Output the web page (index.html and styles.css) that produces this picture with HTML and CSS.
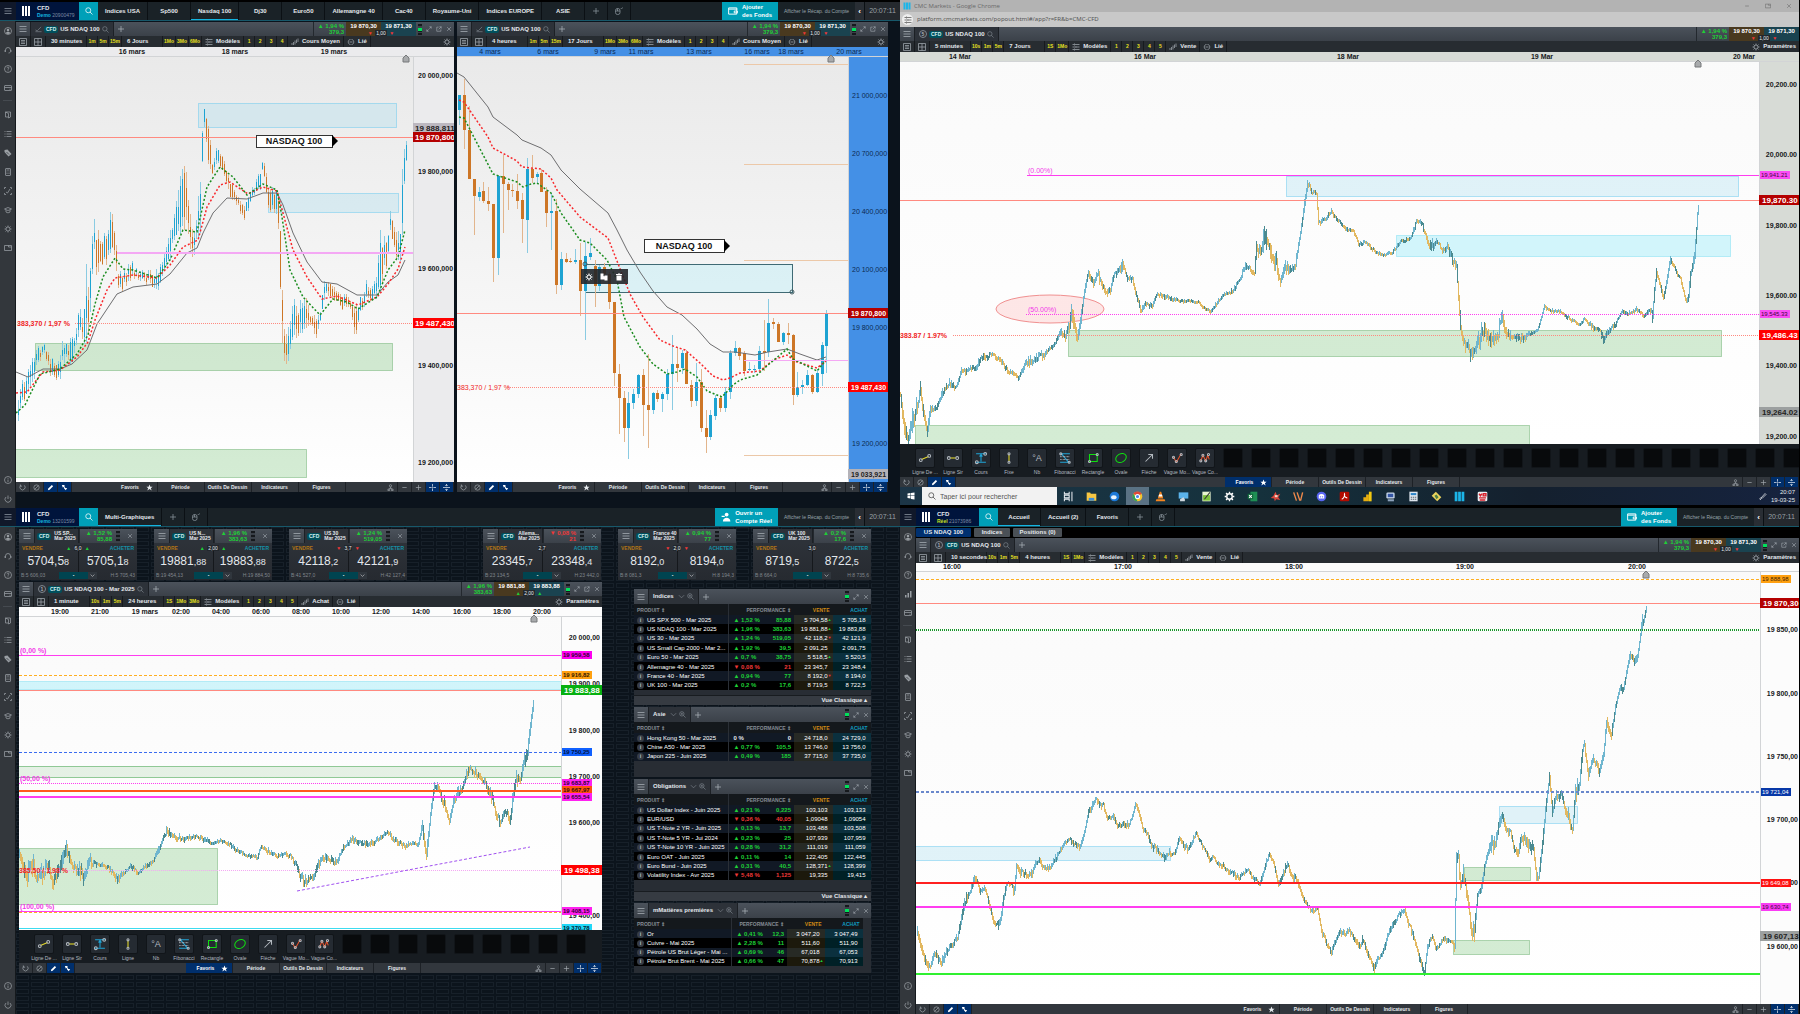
FILE: index.html
```html
<!doctype html>
<html lang="fr">
<head>
    <meta charset="UTF-8">
    <title>CMC Markets</title>
    <link rel="stylesheet" href="styles.css">
</head>
<body>
<svg class="sprite" aria-hidden="true">
    <symbol id="i-menu" viewBox="0 0 16 16"><path d="M1 3h14M1 8h14M1 13h14"/></symbol>
    <symbol id="i-user" viewBox="0 0 16 16"><circle cx="8" cy="8" r="7"/><circle cx="8" cy="6" r="2.6" class="f"/><path class="f" d="M3.5 12.5c1-4 8-4 9 0-2 2-7 2-9 0z"/></symbol>
    <symbol id="i-headset" viewBox="0 0 16 16"><path d="M3 12V8a5 5 0 0 1 10 0v3c0 2-2 3-4 3"/><path d="M2 8v4M14 8v4"/></symbol>
    <symbol id="i-help" viewBox="0 0 16 16"><circle cx="8" cy="8" r="7"/><path d="M6 6.5c0-3 4-3 4-.5 0 1.500-2 1.500-2 3.500M8 11v1.500"/></symbol>
    <symbol id="i-card" viewBox="0 0 16 16"><rect x="1" y="3" width="14" height="10" rx="1"/><path d="M1 7h14M11 10.500h2"/></symbol>
    <symbol id="i-doc" viewBox="0 0 16 16"><path d="M3 2h10v10l-4 2V5L3 2v10h5"/></symbol>
    <symbol id="i-list" viewBox="0 0 16 16"><path d="M1 3h2M1 8h2M1 13h2M5 3h10M5 8h10M5 13h10"/></symbol>
    <symbol id="i-tag" viewBox="0 0 16 16"><path class="f" d="M1 2l6-1 8 9-6 5-8-9z"/><path d="M5 6l5 5" stroke="#33373c"/></symbol>
    <symbol id="i-calc" viewBox="0 0 16 16"><rect x="3" y="1" width="10" height="14" rx="1"/><path d="M5 4h6M5 8h2M9 8h2M5 11h2M9 11h2"/></symbol>
    <symbol id="i-trend" viewBox="0 0 16 16"><path d="M4 10l3 2 5-8M1 4V1h3M12 1h3v3M15 12v3h-3M4 15H1v-3"/></symbol>
    <symbol id="i-cap" viewBox="0 0 16 16"><path d="M1 6l7-3 7 3-7 3zM4 8v4c2 2 6 2 8 0V8"/></symbol>
    <symbol id="i-gear" viewBox="0 0 16 16"><circle cx="8" cy="8" r="4"/><path d="M8 1v3M8 12v3M1 8h3M12 8h3M3 3l2 2M11 11l2 2M13 3l-2 2M5 11l-2 2"/></symbol>
    <symbol id="i-window" viewBox="0 0 16 16"><path d="M1 3h14v10H1zM9 3v3h6"/></symbol>
    <symbol id="i-copy" viewBox="0 0 16 16"><path class="f" d="M1 1h6v5l4 2v5H1zM9 5h6v10H9z"/></symbol>
    <symbol id="i-bin" viewBox="0 0 16 16"><path class="f" d="M3 5h10v10H3zM2 2h4V1h4v1h4v2H2z"/></symbol>
    <symbol id="i-bars" viewBox="0 0 16 16"><path class="f" d="M2 10h3v5H2zM7 6h3v9H7zM12 2h3v13h-3z"/></symbol>
    <symbol id="i-info" viewBox="0 0 16 16"><circle cx="8" cy="8" r="7"/><path d="M8 4v1.500M8 7v5"/></symbol>
    <symbol id="i-power" viewBox="0 0 16 16"><path d="M8 1v7M4 4a6 6 0 1 0 8 0"/></symbol>
    <symbol id="i-search" viewBox="0 0 16 16"><circle cx="6.500" cy="6.500" r="5"/><path d="M10 10l5 5"/></symbol>
    <symbol id="i-zoom" viewBox="0 0 16 16"><circle cx="6.500" cy="6.500" r="5"/><path d="M10 10l5 5M4 6.500h5M6.500 4v5"/></symbol>
    <symbol id="i-wallet" viewBox="0 0 16 16"><path d="M1 3h13v10H1zM1 5h14M10 8h5v3h-5z"/></symbol>
    <symbol id="i-person" viewBox="0 0 16 16"><circle class="f" cx="9" cy="4" r="3"/><path class="f" d="M3 15c0-8 12-8 12 0zM1 6h5v2H1z"/></symbol>
    <symbol id="i-mouse" viewBox="0 0 16 16"><rect x="1" y="3" width="9" height="12" rx="4"/><path d="M5 3v5M1 8h9M12 3l1 1 2-3"/></symbol>
    <symbol id="i-check" viewBox="0 0 16 16"><path d="M1 13h14M1 9l4 2 9-9"/></symbol>
    <symbol id="i-max" viewBox="0 0 16 16"><path d="M9 2h5v5M14 2L9 7M7 14H2V9M2 14l5-5"/></symbol>
    <symbol id="i-pop" viewBox="0 0 16 16"><path d="M7 3H2v11h11V9M9 2h5v5M14 2L7 9"/></symbol>
    <symbol id="i-close" viewBox="0 0 16 16"><path d="M3 3l10 10M13 3L3 13"/></symbol>
    <symbol id="i-panel" viewBox="0 0 16 16"><path d="M1 1h14v14H1zM4 5h8M4 8h8M4 11h8"/></symbol>
    <symbol id="i-grid" viewBox="0 0 16 16"><path d="M1 1h14v14H1zM8 1v14M1 8h14"/></symbol>
    <symbol id="i-sliders" viewBox="0 0 16 16"><path d="M1 3h3M6 3h9M1 8h6M9 8h6M1 13h3M6 13h9M5 1v4M8 6v4M5 11v4"/></symbol>
    <symbol id="i-pair" viewBox="0 0 16 16"><path d="M2 14v-4M5 14V8M8 13V5M11 10V3M14 8V1"/></symbol>
    <symbol id="i-link" viewBox="0 0 16 16"><path d="M7 3C1 3 1 13 7 13M9 3c6 0 6 10 0 10M5 8h6"/></symbol>
    <symbol id="i-pen" viewBox="0 0 16 16"><path d="M4 12l8-9 2 2-8 8zM4 12c-4 0-3 4 0 3"/></symbol>
    <symbol id="i-reload" viewBox="0 0 16 16"><path d="M4 3a6 6 0 1 0 8 0M3 1v4h4"/></symbol>
    <symbol id="i-none" viewBox="0 0 16 16"><circle cx="8" cy="8" r="6"/><path d="M4 12l8-8"/></symbol>
    <symbol id="i-pencil" viewBox="0 0 16 16"><path class="f" d="M2 14l1-4 8-8 3 3-8 8z"/></symbol>
    <symbol id="i-swap" viewBox="0 0 16 16"><path class="f" d="M2 2h6v4l2 3h4l-3 5-4-4V7L4 8z"/></symbol>
    <symbol id="i-star" viewBox="0 0 16 16"><path class="f" d="M8 1l2 5h5l-4 3.500 2 5.500-5-3.500L3 15l2-5.500L1 6h5z"/></symbol>
    <symbol id="i-tree" viewBox="0 0 16 16"><circle cx="8" cy="4" r="2.500"/><path d="M8 7v3M4 10h8M2 12h4v3H2zM10 12h4v3h-4z"/></symbol>
    <symbol id="i-minus" viewBox="0 0 16 16"><path d="M3 8h10"/></symbol>
    <symbol id="i-plus" viewBox="0 0 16 16"><path d="M2 8h12M8 2v12"/></symbol>
    <symbol id="i-cross" viewBox="0 0 16 16"><path d="M0 8h6M10 8h6M8 0v6M8 10v6M7 8h2"/></symbol>
    <symbol id="i-split" viewBox="0 0 16 16"><path d="M0 8h16M8 1v4M8 11v4M5 4l3-3 3 3M5 12l3 3 3-3"/></symbol>
    <symbol id="i-down" viewBox="0 0 16 16"><path d="M2 5l6 6 6-6"/></symbol>
    <symbol id="t-trend" viewBox="0 0 20 20"><path class="y" d="M5 12l10-4"/><circle cx="4" cy="13" r="2"/><circle cx="16" cy="7" r="2"/></symbol>
    <symbol id="t-hline" viewBox="0 0 20 20"><path class="y" d="M6 10h8"/><circle cx="4" cy="10" r="2"/><circle cx="16" cy="10" r="2"/></symbol>
    <symbol id="t-price" viewBox="0 0 20 20"><path class="b" d="M3 4h14M3 16h14M10 5v10M8 8l2-3 2 3"/><circle cx="16" cy="4" r="2"/><circle cx="4" cy="16" r="2"/></symbol>
    <symbol id="t-vline" viewBox="0 0 20 20"><path class="y" d="M10 5v10"/><circle cx="10" cy="4" r="1.500"/><circle cx="10" cy="16" r="1.500"/></symbol>
    <symbol id="t-fibo" viewBox="0 0 20 20"><path class="b" d="M3 4h14M3 16h14M5 4l10 12"/><path d="M3 8h14M3 12h14" stroke-dasharray="1 1"/><circle cx="4" cy="4" r="1.500"/><circle cx="16" cy="16" r="1.500"/></symbol>
    <symbol id="t-rect" viewBox="0 0 20 20"><path class="g" d="M5 5h11v10H5z"/><circle cx="16" cy="5" r="1.500"/><circle cx="5" cy="15" r="1.500"/></symbol>
    <symbol id="t-oval" viewBox="0 0 20 20"><ellipse class="g" cx="10" cy="10" rx="8" ry="6" transform="rotate(-30 10 10)"/></symbol>
    <symbol id="t-arrow" viewBox="0 0 20 20"><path d="M5 15L15 5M9 5h6v6"/></symbol>
    <symbol id="t-wave" viewBox="0 0 20 20"><path class="r" d="M5 9l4 7 7-12"/><circle cx="5" cy="9" r="1.500"/><circle cx="9" cy="15" r="1.500"/><circle cx="16" cy="5" r="1.500"/></symbol>
    <symbol id="t-wave2" viewBox="0 0 20 20"><path class="r" d="M4 14l3-8 4 8 3-8 2 6"/><circle cx="4" cy="14" r="1.500"/><circle cx="7" cy="6" r="1.500"/><circle cx="11" cy="14" r="1.500"/><circle cx="15" cy="5" r="1.500"/></symbol>
    <symbol id="a-windows" viewBox="0 0 16 16"><path fill="#fff" d="M1 3l6-1v5H1zM8 2l7-1v6H8zM1 8h6v5l-6-1zM8 8h7v7l-7-1z"/></symbol>
    <symbol id="a-task" viewBox="0 0 16 16"><path stroke="#e8edf2" fill="none" d="M2 1v3h7V1M2 6h7v4H2zM2 15v-3h7v3M13 1v14"/></symbol>
    <symbol id="a-folder" viewBox="0 0 16 16"><path fill="#f6c643" d="M1 2h5l1 2h8v10H1z"/><path fill="#3d8ed8" d="M4 10h8v4H4z"/></symbol>
    <symbol id="a-bird" viewBox="0 0 16 16"><circle cx="8" cy="8" r="7" fill="#1c79d8"/><ellipse cx="7" cy="9" rx="4" ry="3" fill="#e8f2fb"/></symbol>
    <symbol id="a-chrome" viewBox="0 0 16 16"><circle cx="8" cy="8" r="7" fill="#f3c52f"/><path fill="#df4a3a" d="M2 4a7 7 0 0 1 12 0L8 8z"/><path fill="#2fa35b" d="M2 4l5 9 1 2A7 7 0 0 1 2 4z"/><circle cx="8" cy="8" r="3" fill="#4a86e8" stroke="#fff"/></symbol>
    <symbol id="a-cone" viewBox="0 0 16 16"><path fill="#f5851f" d="M7 1h2l3 10H4zM2 12h12l1 3H1z"/><path fill="#fff" d="M6 5h4l1 3H5z"/></symbol>
    <symbol id="a-screen" viewBox="0 0 16 16"><path fill="#5bb3ea" d="M1 2h14v9H1z"/><path fill="#cfd8df" d="M3 12l5-3 2 3v3H3z"/></symbol>
    <symbol id="a-note" viewBox="0 0 16 16"><path fill="#e9f5d0" d="M2 1h12v14H2z"/><path fill="#7cc13b" d="M3 6h10v8H3z"/><path stroke="#333" d="M5 12l8-10"/></symbol>
    <symbol id="a-gear" viewBox="0 0 16 16"><circle cx="8" cy="8" r="4" fill="none" stroke="#fff" stroke-width="2"/><path stroke="#fff" stroke-width="2" d="M8 1v2M8 13v2M1 8h2M13 8h2M3 3l2 2M11 11l2 2M13 3l-2 2M5 11l-2 2"/></symbol>
    <symbol id="a-excel" viewBox="0 0 16 16"><path fill="#1f8f54" d="M5 1h10v14H5z"/><path fill="#0e6a3b" d="M1 4h8v8H1z"/><path stroke="#fff" d="M3 6l4 4M7 6l-4 4"/></symbol>
    <symbol id="a-splat" viewBox="0 0 16 16"><path fill="#d9453a" d="M8 1l2 5 5-2-3 5 3 4-6-1-2 3-1-4-5-1 4-3z"/><path fill="#f1d7c8" d="M7 6h4v3H7z"/></symbol>
    <symbol id="a-strokes" viewBox="0 0 16 16"><path stroke="#f08a4b" stroke-width="2" d="M1 2l4 12M6 2l4 12M14 2l-3 12"/></symbol>
    <symbol id="a-chat" viewBox="0 0 16 16"><circle cx="8" cy="8" r="7" fill="#5865f2"/><path fill="#fff" d="M4 6c2-2 6-2 8 0v5H4z"/><circle cx="6.500" cy="8.500" r="1" fill="#5865f2"/><circle cx="9.500" cy="8.500" r="1" fill="#5865f2"/></symbol>
    <symbol id="a-pdf" viewBox="0 0 16 16"><rect x="1" y="1" width="14" height="14" rx="2" fill="#b30b00"/><path fill="none" stroke="#fff" d="M4 12c3-1 5-6 4-8-1 3 1 6 4 6"/></symbol>
    <symbol id="a-bars" viewBox="0 0 16 16"><path fill="#e6ad10" d="M2 9h4v6H2zM6 5h4v10H6z"/><path fill="#f2c811" d="M10 1h4v14h-4z"/></symbol>
    <symbol id="a-pc" viewBox="0 0 16 16"><rect x="2" y="2" width="12" height="9" rx="2" fill="#c9d8ea"/><path fill="#3355a4" d="M4 4h8v5H4z"/><path fill="#8da2bb" d="M4 12h9v3H4z"/></symbol>
    <symbol id="a-calc" viewBox="0 0 16 16"><path fill="#dde6ee" d="M2 1h12v14H2z"/><path fill="#2f86c9" d="M4 3h8v3H4z"/><path stroke="#59636e" stroke-dasharray="2 1" d="M4 9h8M4 12h8"/></symbol>
    <symbol id="a-leaf" viewBox="0 0 16 16"><path fill="#ead25c" d="M1 7l6-6 8 8-6 6z"/><path fill="#4d7e45" d="M5 7l3-2 3 4-3 3z"/></symbol>
    <symbol id="a-cmc" viewBox="0 0 16 16"><path fill="#1cb5e8" d="M1 1h4v14H1zM6 1h4v14H6zM11 1h4v14h-4z"/></symbol>
    <symbol id="a-red" viewBox="0 0 16 16"><rect x="1" y="1" width="14" height="14" rx="2" fill="#e9eef2"/><path stroke="#d81f2a" stroke-width="2" fill="none" d="M3 4l2 3 2-3M9 4h4v3H9zM3 10h10M4 13h8"/></symbol>
</svg>

<main class="board">
    <section class="screen">
        <header class="topbar">
            <button class="burger" aria-label="Menu"><svg class="icon"><use href="#i-menu"/></svg></button>
            <div class="brand"><i class="logo"></i><p>CFD<small><b>Demo</b> 20900479</small></p></div>
            <button class="find" aria-label="Rechercher"><svg class="icon"><use href="#i-search"/></svg></button>
            <nav class="tabs">
                <a href="#">Indices USA</a><a href="#">Sp500</a><a href="#" class="selected">Nasdaq 100</a><a href="#">Dj30</a><a href="#">Euro50</a><a href="#">Allemangne 40</a><a href="#">Cac40</a><a href="#">Royaume-Uni</a><a href="#">Indices EUROPE</a><a href="#">ASIE</a>
                <button aria-label="Ajouter"><svg class="icon"><use href="#i-plus"/></svg></button>
                <button aria-label="Souris"><svg class="icon"><use href="#i-mouse"/></svg></button>
            </nav>
            <button class="funds"><svg class="icon"><use href="#i-wallet"/></svg><span>Ajouter<br>des Fonds</span></button>
            <a href="#" class="recap">Afficher le Récap. du Compte</a>
            <button class="fold" aria-label="Replier">‹</button>
            <time class="clock">20:07:11</time>
        </header>
        <div class="body">
            <nav class="rail"></nav>
            <div class="duo">
                <article class="win win-a" data-win="a"></article>
                <article class="win win-b" data-win="b"></article>
            </div>
        </div>
    </section>

    <section class="screen browser">
        <div class="titlebar">
            <svg class="icon"><use href="#a-cmc"/></svg><span>CMC Markets - Google Chrome</span>
            <div class="caption">
                <button aria-label="Réduire"><svg class="icon"><use href="#i-minus"/></svg></button>
                <button aria-label="Restaurer"><svg class="icon"><use href="#i-window"/></svg></button>
                <button aria-label="Fermer"><svg class="icon"><use href="#i-close"/></svg></button>
            </div>
        </div>
        <div class="urlbar">
            <button aria-label="Infos du site"><svg class="icon"><use href="#i-sliders"/></svg></button>
            <input type="text" aria-label="Adresse" value="platform.cmcmarkets.com/popout.html#/app?r=FR&amp;b=CMC-CFD">
        </div>
        <article class="win" data-win="d"></article>
        <footer class="taskbar">
            <button aria-label="Démarrer"><svg class="icon"><use href="#a-windows"/></svg></button>
            <label class="ask"><svg class="icon"><use href="#i-search"/></svg><input type="text" placeholder="Taper ici pour rechercher" aria-label="Rechercher"></label>
            <div class="apps"></div>
            <svg class="icon"><use href="#i-pen"/></svg>
            <time>20:07<br>19-03-25</time>
        </footer>
    </section>

    <section class="screen">
        <header class="topbar">
            <button class="burger" aria-label="Menu"><svg class="icon"><use href="#i-menu"/></svg></button>
            <div class="brand"><i class="logo"></i><p>CFD<small><b>Demo</b> 13201599</small></p></div>
            <button class="find" aria-label="Rechercher"><svg class="icon"><use href="#i-search"/></svg></button>
            <nav class="tabs">
                <a href="#" class="selected">Multi-Graphiques</a>
                <button aria-label="Ajouter"><svg class="icon"><use href="#i-plus"/></svg></button>
                <button aria-label="Souris"><svg class="icon"><use href="#i-mouse"/></svg></button>
            </nav>
            <button class="funds wide"><svg class="icon"><use href="#i-person"/></svg><span>Ouvrir un<br>Compte Réel</span></button>
            <a href="#" class="recap">Afficher le Récap. du Compte</a>
            <button class="fold" aria-label="Replier">‹</button>
            <time class="clock">20:07:11</time>
        </header>
        <div class="body">
            <nav class="rail"></nav>
            <div class="desk">
                <div class="tiles"><div class="group" id="tiles1"></div><div class="group" id="tiles2"></div></div>
                <div class="work">
                    <article class="win" data-win="c"></article>
                    <div class="lists"></div>
                </div>
            </div>
        </div>
    </section>

    <section class="screen live">
        <header class="topbar">
            <button class="burger" aria-label="Menu"><svg class="icon"><use href="#i-menu"/></svg></button>
            <div class="brand"><i class="logo"></i><p>CFD<small><b>Réel</b> 21073986</small></p></div>
            <button class="find" aria-label="Rechercher"><svg class="icon"><use href="#i-search"/></svg></button>
            <nav class="tabs">
                <a href="#" class="selected">Accueil</a><a href="#">Accueil (2)</a><a href="#">Favoris</a>
                <button aria-label="Ajouter"><svg class="icon"><use href="#i-plus"/></svg></button>
                <button aria-label="Souris"><svg class="icon"><use href="#i-mouse"/></svg></button>
            </nav>
            <button class="funds"><svg class="icon"><use href="#i-wallet"/></svg><span>Ajouter<br>des Fonds</span></button>
            <a href="#" class="recap">Afficher le Récap. du Compte</a>
            <button class="fold" aria-label="Replier">‹</button>
            <time class="clock">20:07:11</time>
        </header>
        <div class="body">
            <nav class="rail" data-extra="bars"></nav>
            <div class="stack">
                <div class="subtabs"><button class="selected">US NDAQ 100</button><button>Indices</button><button>Positions (0)</button></div>
                <article class="win" data-win="e"></article>
            </div>
        </div>
    </section>
</main>
<script src="script.js"></script>
</body>
</html>
```

FILE: styles.css
```css
*{
    box-sizing: border-box;
}
body{
    margin: 0;
    background: #000;
    color: #e4e8ec;
    font: bold 6px/7px "Liberation Sans", Arial, sans-serif;
}
h2, p{
    margin: 0;
    font: inherit;
}
a{
    color: inherit;
    text-decoration: none;
}
button, input{
    margin: 0;
    padding: 0;
    border: 0;
    background: none;
    color: inherit;
    font: inherit;
}
button{
    display: flex;
    align-items: center;
    justify-content: center;
    flex: none;
    white-space: nowrap;
}
.sprite{
    display: none;
}
.icon{
    display: block;
    flex: none;
    width: 8px;
    height: 8px;
    fill: none;
    stroke: currentColor;
    stroke-width: 1.5;
}
.f{
    fill: currentColor;
    stroke: none;
}
.y{ stroke: #e8dc28; }
.b{ stroke: #1fa5d8; }
.g{ stroke: #10e010; }
.r{ stroke: #e8522a; }
.apps .icon, .titlebar > .icon, .taskbar > button .icon{
    stroke: none;
}

.board{
    display: grid;
    grid-template-columns: 1fr 1fr;
    grid-template-rows: 508fr 506fr;
    height: 100vh;
}
.screen{
    display: flex;
    flex-direction: column;
    min-width: 0;
    min-height: 0;
    overflow: hidden;
}
.screen:first-child{
    padding-top: 2px;
}
.body{
    display: flex;
    flex: 1;
    min-height: 0;
    background: #0b131c;
}

/* top bar */
.topbar{
    display: flex;
    flex: none;
    height: 19px;
    background: #1a2227;
    border-bottom: 1px solid #17586a;
}
.burger{
    width: 16px;
    background: #10182a;
    color: #8e97a3;
}
.brand{
    display: flex;
    align-items: center;
    gap: 7px;
    width: 63px;
    padding-left: 6px;
    background: #00143c;
}
.logo{
    width: 8px;
    height: 10px;
    background: linear-gradient(90deg, #fff 2px, transparent 2px 3px, #fff 3px 5px, transparent 5px 6px, #fff 6px);
}
.brand small{
    display: block;
    font: 5px/6px "Liberation Sans", Arial, sans-serif;
    color: #7c8ba3;
}
.brand b{
    color: #14b4e0;
}
.live .brand b{
    color: #c8e020;
}
.find{
    width: 19px;
    background: #00a0b8;
    color: #fff;
}
.tabs{
    display: flex;
    flex: 1;
}
.tabs a, .tabs button{
    display: flex;
    align-items: center;
    justify-content: center;
    min-width: 43px;
    padding: 0 7px;
    border-right: 1px solid #0b1014;
    white-space: nowrap;
}
.tabs button{
    min-width: 23px;
    color: #8b959d;
}
.tabs .selected{
    box-shadow: inset 0 -1px #14b4e0;
}
.funds{
    gap: 4px;
    width: 56px;
    background: #00a0b8;
    color: #fff;
    text-align: left;
    line-height: 8px;
}
.funds .icon{
    width: 10px;
    height: 10px;
}
.wide{
    width: 63px;
}
.recap{
    display: flex;
    align-items: center;
    justify-content: center;
    width: 77px;
    font-weight: normal;
    font-size: 5px;
    color: #98a2aa;
    white-space: nowrap;
}
.fold{
    width: 9px;
    background: #292e34;
    color: #fff;
    font-size: 8px;
}
.clock{
    width: 36px;
    border-left: 1px solid #0b1014;
    background: #25292e;
    color: #9aa0a6;
    font: 7px/18px "Liberation Sans", Arial, sans-serif;
    text-align: center;
}

/* left rail */
.rail{
    display: flex;
    flex: none;
    flex-direction: column;
    width: 16px;
    background: #33373c;
    color: #9a9fa4;
    border-right: 1px solid #15191d;
}
.rail button{
    height: 19px;
}
.rail hr{
    width: 9px;
    height: 1px;
    margin: 3px auto 4px;
    border: 0;
    background: #454a50;
}
.rail .low{
    margin-top: auto;
}

/* chart windows */
.duo{
    display: flex;
    flex: 1;
    gap: 3px;
    min-width: 0;
    padding: 1px 12px 16px 0;
}
.win{
    display: flex;
    flex: 1;
    flex-direction: column;
    min-width: 0;
    min-height: 0;
}
.win-a{
    flex: 438;
}
.win-b{
    flex: 431;
}
.win-head{
    display: flex;
    flex: none;
    align-items: stretch;
    height: 14px;
    background: linear-gradient(#4b525b, #3b4149);
}
.win-head > button{
    width: 14px;
    color: #a9b0b7;
}
.win-tab{
    display: flex;
    align-items: center;
    gap: 2px;
    padding: 0 4px;
    background: #2d3239;
    border: solid #1c2025;
    border-width: 0 1px;
    white-space: nowrap;
}
.win-tab .icon{
    width: 7px;
    height: 7px;
    color: #7f868e;
}
.num{
    width: 8px;
    height: 8px;
    border: 1px solid #7f868e;
    border-radius: 50%;
    color: #a9b0b7;
    font-size: 5px;
    line-height: 6px;
    text-align: center;
}
.cfd{
    padding: 0 2px;
    border-radius: 2px;
    background: #00505c;
    color: #d8f0f2;
    font-size: 5px;
    line-height: 7px;
}
.win-head .space{
    flex: 1;
}
.perf{
    padding: 1px 2px 0 4px;
    border-left: 1px solid #23282e;
    color: #1ed036;
    line-height: 6px;
    text-align: right;
    white-space: nowrap;
}
.down{
    color: #f03838;
}
.up{
    color: #1ed036;
}
.quote{
    position: relative;
    display: flex;
}
.quote button{
    align-items: flex-start;
    width: 35px;
    padding-top: 1px;
    background: #49391f;
    color: #fff;
}
.quote button + button{
    background: #1a4350;
}
.quote .spread{
    position: absolute;
    right: 0;
    bottom: 0;
    left: 0;
    font-size: 5px;
    line-height: 5px;
    text-align: center;
}
.spread i{
    margin: 0 1px;
    font-style: normal;
}
.spread b{
    padding: 0 1px;
    background: #22272d;
    font-weight: normal;
}
.level{
    align-self: center;
    width: 4px;
    height: 11px;
    margin: 0 2px;
    background: linear-gradient(#16191d 2px, #3a4048 2px 4px, #00e05a 4px 7px, #16191d 7px 8px, #3a4048 8px 9px, #16191d 9px);
}
.win-head .ctl{
    width: 10px;
}
.ctl .icon{
    width: 6px;
    height: 6px;
}

.toolbar{
    display: flex;
    flex: none;
    height: 11px;
    background: #272c31;
    overflow: hidden;
}
.toolbar button{
    gap: 3px;
    padding: 0 3px;
    border-right: 1px solid #171a1e;
}
.toolbar .icon{
    color: #a0a7ae;
}
.toolbar .ico{
    width: 15px;
}
.toolbar .span{
    justify-content: flex-start;
    width: 41px;
    padding-left: 5px;
}
.toolbar .pick{
    min-width: 11px;
    padding: 0 1px;
    color: #e8e020;
    font-size: 5px;
}
.toolbar .end{
    margin-left: auto;
    border: 0;
}

.chart{
    flex: 1;
    min-height: 0;
    overflow: hidden;
}
.chart svg{
    display: block;
    width: 100%;
    height: 100%;
    font: bold 7px "Liberation Sans", Arial, sans-serif;
}
.chart-a .strip, .chart-a .axis{ fill: #ebebed; }
.chart-b .strip, .chart-b .axis{ fill: #4490e6; }
.chart-c .strip, .chart-c .axis, .chart-e .strip, .chart-e .axis{ fill: #fcfcfc; }
.chart-d .strip, .chart-d .axis{ fill: #d7dbd6; }
.chart-b .label{
    fill: #0c2a52;
    font-weight: normal;
}
.edge{ stroke: #d2d4d6; }
.label{ fill: #16181a; }
.date{ text-anchor: middle; }
.tick-end{ text-anchor: end; }
.zone-blue{ fill: rgba(160, 220, 240, .3); stroke: #68c8ee; stroke-dasharray: 1 1; }
.zone-cyan{ fill: rgba(120, 230, 250, .32); stroke: #7fdff2; stroke-dasharray: 1 1; }
.zone-green{ fill: rgba(120, 195, 120, .32); stroke: #6cb070; stroke-dasharray: 1 1; }
.zone-band{ fill: rgba(120, 190, 120, .18); stroke: #2f9a3a; stroke-dasharray: 1 1; }
.zone-edit{ fill: rgba(180, 235, 245, .4); stroke: #3f6a74; }
.zone-oval{ fill: rgba(255, 180, 180, .3); stroke: #f09090; }
.ln{ stroke-width: 1; fill: none; shape-rendering: crispEdges; }
.thick{ stroke-width: 2; }
.dots{ stroke-dasharray: 1 1; }
.dash{ stroke-dasharray: 3 2; }
.red{ stroke: #ff8a80; }
.hot{ stroke: #ff2020; }
.pink{ stroke: #f4a8f4; }
.mag{ stroke: #ff3cf0; }
.amber{ stroke: #ffae20; }
.blue{ stroke: #3a6cf0; }
.navy{ stroke: #6a88cc; }
.flame{ stroke: #ff5a1e; }
.green{ stroke: #18962a; }
.lime{ stroke: #30f030; }
.cyan{ stroke: #3cdcf0; }
.sand{ stroke: #ecc8a8; }
.violet{ stroke: #a050f0; }
.avg{ fill: none; stroke: #6e6e70; stroke-width: 1; }
.avg-red{ stroke: #f8282c; stroke-width: 1.5; stroke-dasharray: 2 2; }
.avg-green{ stroke: #1a8c1e; stroke-width: 1.5; stroke-dasharray: 2 2; }
.up-bar{ stroke: #1ea3d2; }
.down-bar{ stroke: #cd7626; }
.up-wick{ stroke: #8acbe2; }
.down-wick{ stroke: #e2b58c; }
.c-up{ stroke: #6fb6cf; }
.c-down{ stroke: #e2b860; }
.c-mix{ stroke: #4a8a90; }
.note-red{ fill: #f02424; }
.note-mag{ fill: #f23ae8; }
.light{ font-weight: normal; }
.big{ font-size: 8px; }
.small{ font-size: 6px; }
.chart-d .small, .chart-e .small{ font-weight: normal; }
.flag{ fill: #fff; stroke: #333; }
.flag-text{ fill: #111; font-size: 9px; text-anchor: middle; }
.home{ fill: #a8aaac; stroke: #77797b; }
.handle{ fill: none; stroke: #3f5a60; }
.edit-bar{ fill: rgba(34, 38, 42, .9); }
.chart .edit{ color: #fff; stroke: #fff; stroke-width: 2; fill: none; }

/* drawing tools under a chart */
.dock{
    display: flex;
    flex: none;
    height: 33px;
    padding: 4px 0 0 11px;
    background: #171c21;
    overflow: hidden;
}
.dock button{
    flex-direction: column;
    justify-content: flex-start;
    gap: 1px;
    width: 28px;
    font-weight: normal;
    font-size: 5px;
    line-height: 6px;
    color: #b4bac0;
}
.dock .slot{
    display: flex;
    flex: none;
    align-items: center;
    justify-content: center;
    width: 20px;
    height: 20px;
    border: 1px solid #111519;
    border-radius: 2px;
    background: #252b32;
    font: 9px/12px "Liberation Sans", Arial, sans-serif;
}
.slot .icon{
    width: 14px;
    height: 14px;
}
.dock .empty{
    margin: 0 4px;
    background: #080a0c;
}
.tools{
    display: flex;
    flex: none;
    height: 10px;
    background: #32373d;
}
.tools .mid{
    display: flex;
    flex: 1;
    justify-content: center;
}
.tools button{
    width: 14px;
    border-right: 1px solid #1d2126;
    color: #a5abb1;
    line-height: 8px;
}
.tools .mid button{
    width: 47px;
    color: #e4e8ec;
    font-size: 5px;
}
.tools .mid button:first-child{
    justify-content: space-between;
    padding: 0 4px;
}
.tools .icon{
    width: 7px;
    height: 7px;
}
.tools .on, .tools .mid .on{
    background: #002f6c;
    color: #fff;
}
.tools span{
    flex: 1;
}

/* browser window */
.browser, .live{
    padding-right: 1px;
}
.titlebar{
    display: flex;
    flex: none;
    align-items: center;
    gap: 3px;
    height: 12px;
    padding-left: 3px;
    background: #b3b3b3;
    color: #6a6a6a;
    font: 6px/8px "Open Sans", sans-serif;
}
.caption{
    display: flex;
    margin-left: auto;
}
.caption button{
    width: 21px;
}
.caption .icon{
    width: 6px;
    height: 6px;
}
.urlbar{
    display: flex;
    flex: none;
    align-items: center;
    gap: 4px;
    height: 15px;
    padding-left: 2px;
    background: #c8c8c8;
    color: #555;
}
.urlbar button{
    width: 11px;
    height: 11px;
    border-radius: 50%;
    background: #eee;
}
.urlbar input{
    flex: 1;
    height: 11px;
    font: 6px/11px "Noto Sans", sans-serif;
}
.taskbar{
    display: flex;
    flex: none;
    align-items: center;
    height: 18px;
    margin-bottom: 3px;
    background: linear-gradient(90deg, #1c3547, #15313c 40%, #14202e 70%, #16233f);
}
.taskbar > button{
    width: 22px;
}
.ask{
    display: flex;
    align-items: center;
    gap: 4px;
    width: 135px;
    height: 18px;
    padding-left: 6px;
    background: #f2f2f2;
    color: #444;
}
.ask input{
    flex: 1;
    min-width: 0;
    height: 11px;
    font: 7px/11px "Liberation Sans", Arial, sans-serif;
}
.ask input::placeholder{
    color: #555;
}
.apps{
    display: flex;
    flex: 1;
}
.apps button{
    width: 23px;
    height: 18px;
}
.apps .icon{
    width: 11px;
    height: 11px;
}
.apps .on{
    background: #5a7284;
}
.taskbar time{
    width: 32px;
    padding-right: 4px;
    font: 6px/8px "Liberation Sans", Arial, sans-serif;
    text-align: right;
}

/* quote tiles and price lists */
.desk{
    --bg: #0c141c;
    display: flex;
    flex: 1;
    flex-direction: column;
    gap: 2px;
    min-width: 0;
    padding: 2px 29px 41px 3px;
    background:
        linear-gradient(90deg, transparent 13px, var(--bg) 13px),
        linear-gradient(transparent 5px, var(--bg) 5px),
        linear-gradient(90deg, #172029 1px, transparent 1px 12px, #172029 12px),
        linear-gradient(#172029 1px, transparent 1px 4px, #172029 4px),
        var(--bg);
    background-size: 15px 7px;
}
.tiles, .group{
    display: flex;
    justify-content: space-between;
}
.group{
    gap: 17px;
}
.tile{
    width: 118px;
    height: 51px;
    background: linear-gradient(#30353c, #262a30);
}
.tile .win-head > button{
    width: 15px;
}
.tile h2{
    width: 22px;
    font-size: 5px;
    line-height: 5px;
}
.tile .win-tab{
    gap: 3px;
    padding: 0 2px;
}
.tile .perf{
    flex: 1;
}
.tile .perf.down{
    color: #f03838;
}
.tile .level{
    background: repeating-linear-gradient(#16191d 0 2px, #3a4048 2px 4px);
}
.sides{
    display: grid;
    grid-template-columns: 1fr auto 1fr;
    padding: 2px 3px 0;
    font-size: 5px;
    line-height: 6px;
}
.sell{ color: #b07416; }
.buy{ color: #1690a8; }
.sides .buy{ text-align: right; }
.tile .spread{
    font-weight: normal;
}
.price{
    display: flex;
    height: 21px;
}
.price p{
    flex: 1;
    font: 12px/21px "Liberation Sans", Arial, sans-serif;
    text-align: center;
}
.price p + p{
    border-left: 1px solid #15181c;
}
.price small{
    font-size: 9px;
}
.range{
    display: grid;
    grid-template-columns: 1fr 29px 9px 1fr;
    padding: 0 2px;
    color: #80868c;
    font-weight: normal;
    font-size: 5px;
    line-height: 7px;
    white-space: nowrap;
}
.range b{
    background: #004450;
    color: #fff;
    text-align: center;
}
.range button{
    background: #30363d;
    color: #fff;
}
.range .icon{
    width: 5px;
    height: 5px;
}
.range span:last-child{
    text-align: right;
}

.work{
    display: flex;
    flex: 1;
    gap: 32px;
    min-height: 0;
}
.lists{
    display: grid;
    flex: none;
    grid-template-rows: 116fr 70fr 122fr 70fr;
    gap: 2px;
    width: 237px;
    padding-top: 7px;
}
.panel{
    display: flex;
    flex-direction: column;
    min-height: 0;
    background: #282d34;
    overflow: hidden;
}
.panel .win-head{
    height: 15px;
}
.panel h2{
    margin-right: 2px;
}
.panel table{
    border-collapse: collapse;
    table-layout: fixed;
    width: 100%;
    line-height: 8px;
    white-space: nowrap;
}
.panel th, .panel td{
    height: 9px;
    padding: 0 3px;
    overflow: hidden;
    text-align: right;
}
.panel thead tr{
    height: 11px;
    background: #14181c;
}
.panel th{
    color: #858c94;
    font-size: 5px;
}
.panel thead .sell{ color: #d08a14; }
.panel thead .buy{ color: #109cc0; }
.panel .name{
    width: 94px;
    padding-right: 0;
    text-align: left;
}
.panel .pct{
    width: 33px;
    padding: 0 0 0 5px;
    border-left: 1px solid #2a2f36;
    text-align: left;
}
.panel .chg{
    width: 33px;
    padding-left: 0;
}
.panel .ask-col{
    width: 38px;
}
.panel td.name{
    font-weight: normal;
    color: #fff;
}
.panel tbody tr{
    background: #111925;
}
.panel tbody tr:nth-child(even){
    background: #000;
}
.panel td.bid{ background: rgba(92, 84, 40, .3); padding: 0 5px 0 0; }
.panel td.ask-col{ background: rgba(0, 92, 110, .35); padding: 0 5px 0 0; }
.panel td.bid, .panel td.ask-col{
    font-weight: normal;
    color: #fff;
}
.panel .bid.up::after, .panel .bid.down::after{
    content: "▲";
    float: right;
    width: 4px;
    margin-right: -4px;
    color: #1ed036;
    font-size: 4px;
}
.panel .bid.down::after{
    content: "▼";
    color: #f03838;
}
.dot{
    display: inline-block;
    width: 7px;
    height: 7px;
    margin-right: 3px;
    border-radius: 50%;
    background: #363c44;
    font-size: 5px;
    font-style: normal;
    line-height: 7px;
    text-align: center;
}
.rows8{ height: 86px; }
.rows3{ height: 39px; }
.rows4{ height: 48px; }
.classic{
    justify-content: flex-end;
    height: 10px;
    margin-top: auto;
    padding-right: 4px;
    background: #363b42;
    border-top: 1px solid #181c20;
}
.scroll table{
    width: 229px;
}
.scroll .name{
    width: 97px;
}
.scroll .pct{
    width: 33px;
}
.scroll .chg{
    width: 23px;
}

/* live account */
.stack{
    display: flex;
    flex: 1;
    flex-direction: column;
    min-width: 0;
    background: #000;
}
.subtabs{
    display: flex;
    flex: none;
    gap: 3px;
    height: 11px;
    padding: 1px 0;
}
.subtabs button{
    width: 36px;
    border-radius: 1px;
    background: #4a5056;
}
.subtabs .selected{
    width: 55px;
    background: #003070;
}
.subtabs :last-child{
    width: 49px;
}
```

FILE: script.js
```js
var icon = function(id){ return '<svg class="icon"><use href="#' + id + '"/></svg>'; };
var iconBtn = function(id, label, cls){
    return '<button class="' + (cls || '') + '" aria-label="' + label + '">' + icon(id) + '</button>';
};

/* rails */
var railItems = ['user', 'headset', 'help', 'card', '-', 'doc', 'list', 'tag', 'calc', 'trend', 'cap', 'gear', 'window'];
document.querySelectorAll('.rail').forEach(function(rail){
    var items = railItems.slice();
    if(rail.dataset.extra){
        items.splice(3, 0, rail.dataset.extra);
    }
    rail.innerHTML = items.map(function(n){
        return n == '-' ? '<hr>' : iconBtn('i-' + n, n);
    }).join('') + iconBtn('i-info', 'info', 'low') + iconBtn('i-power', 'power');
});

/* taskbar */
document.querySelector('.apps').innerHTML = ['task', 'folder', 'bird', 'chrome', 'cone', 'screen', 'note', 'gear', 'excel', 'splat', 'strokes', 'chat', 'pdf', 'bars', 'pc', 'calc', 'leaf', 'cmc', 'red'].map(function(n){
    return iconBtn('a-' + n, n, n == 'chrome' ? 'on' : '');
}).join('');

/* windows */
var wins = {
    a: {mark: icon('i-check'), name: 'US NDAQ 100', plus: 1, perf: ['1,94 %', '379,3'], q: ['19 870,30', '19 871,30', '1,00'], dir: 'down', ctl: 3,
        t1: '30 minutes', p1: ['1m', '5m', '15m'], t2: '6 Jours', p2: ['1Mo', '3Mo', '6Mo'], m: 4, side: 'Cours Moyen'},
    b: {mark: icon('i-check'), name: 'US NDAQ 100', plus: 1, perf: ['1,94 %', '379,3'], q: ['19 870,30', '19 871,30', '1,00'], dir: 'down', ctl: 3,
        t1: '4 heures', p1: ['1m', '5m', '15m'], t2: '17 Jours', p2: ['1Mo', '3Mo', '6Mo'], m: 4, side: 'Cours Moyen'},
    c: {mark: '<span class="num">1</span>', name: 'US NDAQ 100 - Mar 2025', plus: 1, perf: ['1,96 %', '383,63'], q: ['19 881,88', '19 883,88', '2,00'], dir: 'up', ctl: 3,
        t1: '1 minute', p1: ['10s', '1m', '5m'], t2: '24 heures', p2: ['1S', '1Mo', '3Mo'], m: 5, side: 'Achat', param: 1, dock: 9, fourth: 'Ligne'},
    d: {mark: '<span class="num">5</span>', name: 'US NDAQ 100', perf: ['1,94 %', '379,3'], q: ['19 870,30', '19 871,30', '1,00'], dir: 'down', ctl: 0,
        t1: '5 minutes', p1: ['10s', '1m', '5m'], t2: '7 Jours', p2: ['1S', '1Mo'], m: 5, side: 'Vente', param: 1, dock: 21, fourth: 'Fixe'},
    e: {mark: '<span class="num">1</span>', name: 'US NDAQ 100', plus: 1, perf: ['1,94 %', '379,3'], q: ['19 870,30', '19 871,30', '1,00'], dir: 'down', ctl: 3,
        t1: '10 secondes', p1: ['10s', '1m', '5m'], t2: '4 heures', p2: ['1S', '1Mo'], m: 5, side: 'Vente', param: 1}
};
function arrow(dir){
    return '<i class="' + dir + '">' + (dir == 'up' ? '▲' : '▼') + '</i>';
}
function picks(list){
    return list.map(function(t){ return '<button class="pick">' + t + '</button>'; }).join('');
}
function winHead(w){
    var s = '<header class="win-head">' + iconBtn('i-menu', 'Menu') +
        '<div class="win-tab">' + w.mark + '<span class="cfd">CFD</span><h2>' + w.name + '</h2>' + icon('i-search') + '</div>' +
        (w.plus ? iconBtn('i-plus', 'Ajouter') : '') + '<span class="space"></span>' +
        '<div class="perf">▲ ' + w.perf[0] + '<br>' + w.perf[1] + '</div>' +
        '<div class="quote"><button>' + w.q[0] + '</button><button>' + w.q[1] + '</button>' +
        '<span class="spread">' + arrow(w.dir) + ' <b>' + w.q[2] + '</b> ' + arrow(w.dir) + '</span></div>';
    if(w.ctl){
        s += '<i class="level"></i>' + iconBtn('i-max', 'Agrandir', 'ctl') + iconBtn('i-pop', 'Détacher', 'ctl') + iconBtn('i-close', 'Fermer', 'ctl');
    }
    return s + '</header>';
}
function toolbar(w){
    var nums = ['1', '2', '3', '4', '5'].slice(0, w.m);
    return '<div class="toolbar">' + iconBtn('i-panel', 'Panneau', 'ico') + iconBtn('i-grid', 'Grille', 'ico') +
        '<button class="span">' + w.t1 + '</button>' + picks(w.p1) +
        '<button class="span">' + w.t2 + '</button>' + picks(w.p2) +
        '<button>' + icon('i-sliders') + 'Modèles</button>' + picks(nums) +
        '<button>' + icon('i-pair') + w.side + '</button><button>' + icon('i-link') + 'Lié</button>' +
        '<button class="end">' + icon('i-gear') + (w.param ? 'Paramètres' : '') + '</button></div>';
}
function dock(w){
    var list = [['trend', 'Ligne De ...'], ['hline', 'Ligne Sir'], ['price', 'Cours'], ['vline', w.fourth], ['', 'Nb'], ['fibo', 'Fibonacci'],
        ['rect', 'Rectangle'], ['oval', 'Ovale'], ['arrow', 'Flèche'], ['wave', 'Vague Mo...'], ['wave2', 'Vague Co...']];
    var s = '<div class="dock">' + list.map(function(t){
        return '<button><span class="slot">' + (t[0] ? icon('t-' + t[0]) : '°A') + '</span>' + t[1] + '</button>';
    }).join('');
    for(var i = 0; i < w.dock; i++){
        s += '<span class="slot empty"></span>';
    }
    return s + '</div>';
}
function tools(w){
    return '<footer class="tools">' + iconBtn('i-reload', 'Réinitialiser') + iconBtn('i-none', 'Effacer') + iconBtn('i-pencil', 'Dessiner', 'on') + iconBtn('i-swap', 'Aimant', 'on') +
        '<div class="mid"><button class="' + (w.dock ? 'on' : '') + '"><span>Favoris</span>' + icon('i-star') + '</button><button>Période</button><button>Outils De Dessin</button><button>Indicateurs</button><button>Figures</button></div>' +
        iconBtn('i-tree', 'Objets') + iconBtn('i-minus', 'Zoom arrière') + iconBtn('i-plus', 'Zoom avant') + iconBtn('i-cross', 'Curseur', 'on') + iconBtn('i-split', 'Échelle', 'on') + '</footer>';
}
document.querySelectorAll('.win').forEach(function(el){
    var k = el.dataset.win, w = wins[k];
    el.innerHTML = winHead(w) + toolbar(w) + '<div class="chart chart-' + k + '" data-chart="' + k + '"></div>' + (w.dock ? dock(w) : '') + tools(w);
});

/* quote tiles: name, dir, pct, change, spread, ticks, bid, ask, low, high */
var tiles = [
    ['US SP...', 'up', '1,52 %', '85,88', '6,0', 'up', '5704,5', '8', '5705,1', '8', '5 606,03', '5 705,43'],
    ['US N...', 'up', '1,96 %', '383,63', '2,00', 'up', '19881', ',88', '19883', ',88', '19 454,13', '19 884,50'],
    ['US 30', 'up', '1,24 %', '519,05', '3,7', 'down', '42118', ',2', '42121', ',9', '41 527,0', '42 127,4'],
    ['Allema...', 'down', '0,08 %', '21', '2,7', '', '23345', ',7', '23348', ',4', '23 134,5', '23 442,0'],
    ['France 40', 'up', '0,94 %', '77', '2,0', 'down', '8192', ',0', '8194', ',0', '8 081,3', '8 194,3'],
    ['UK 100', 'up', '0,2 %', '17,6', '3,0', '', '8719', ',5', '8722', ',5', '8 664,0', '8 735,6']
];
tiles.forEach(function(t, i){
    var a = t[5] ? arrow(t[5]) : '';
    document.getElementById(i < 3 ? 'tiles1' : 'tiles2').insertAdjacentHTML('beforeend',
        '<article class="tile"><header class="win-head">' + iconBtn('i-menu', 'Menu') +
        '<div class="win-tab"><span class="cfd">CFD</span><h2>' + t[0] + '<br>Mar 2025</h2></div>' +
        '<div class="perf ' + t[1] + '">' + (t[1] == 'up' ? '▲ ' : '▼ ') + t[2] + '<br>' + t[3] + '</div><i class="level"></i>' + iconBtn('i-close', 'Fermer', 'ctl') + '</header>' +
        '<div class="sides"><span class="sell">VENDRE</span><span class="spread">' + a + ' <b>' + t[4] + '</b> ' + a + '</span><span class="buy">ACHETER</span></div>' +
        '<div class="price"><p>' + t[6] + '<small>' + t[7] + '</small></p><p>' + t[8] + '<small>' + t[9] + '</small></p></div>' +
        '<div class="range"><span>B:' + t[10] + '</span><b>-</b>' + iconBtn('i-down', 'Quantité') + '<span>H:' + t[11] + '</span></div></article>');
});

/* price lists: name, pct, change, bid, ask, tick ('-' in front of pct = falling) */
var lists = [
    {title: 'Indices', foot: 1, rows: [
        ['US SPX 500 - Mar 2025', '1,52 %', '85,88', '5 704,58', '5 705,18', 'up'],
        ['US NDAQ 100 - Mar 2025', '1,96 %', '383,63', '19 881,88', '19 883,88', 'up'],
        ['US 30 - Mar 2025', '1,24 %', '519,05', '42 118,2', '42 121,9', 'down'],
        ['US Small Cap 2000 - Mar 2...', '1,92 %', '39,5', '2 091,25', '2 091,75'],
        ['Euro 50 - Mar 2025', '0,7 %', '38,75', '5 518,5', '5 520,5', 'up'],
        ['Allemagne 40 - Mar 2025', '-0,08 %', '21', '23 345,7', '23 348,4'],
        ['France 40 - Mar 2025', '0,94 %', '77', '8 192,0', '8 194,0', 'down'],
        ['UK 100 - Mar 2025', '0,2 %', '17,6', '8 719,5', '8 722,5']]},
    {title: 'Asie', rows: [
        ['Hong Kong 50 - Mar 2025', '0 %', '0', '24 718,0', '24 729,0'],
        ['Chine A50 - Mar 2025', '0,77 %', '105,5', '13 746,0', '13 756,0'],
        ['Japon 225 - Juin 2025', '0,49 %', '185', '37 715,0', '37 735,0']]},
    {title: 'Obligations', foot: 1, rows: [
        ['US Dollar Index - Juin 2025', '0,21 %', '0,225', '103,103', '103,133'],
        ['EUR/USD', '-0,36 %', '40,05', '1,09048', '1,09054'],
        ['US T-Note 2 YR - Juin 2025', '0,13 %', '13,7', '103,488', '103,508'],
        ['US T-Note 5 YR - Jui 2024', '0,23 %', '25', '107,939', '107,959'],
        ['US T-Note 10 YR - Juin 2025', '0,28 %', '31,2', '111,019', '111,059'],
        ['Euro OAT - Juin 2025', '0,11 %', '14', '122,405', '122,445'],
        ['Euro Bund - Juin 2025', '0,31 %', '40,5', '128,371', '128,399', 'up'],
        ['Volatility Index - Avr 2025', '-5,48 %', '1,125', '19,335', '19,415']]},
    {title: 'mMatières premières', scroll: 1, rows: [
        ['Or', '0,41 %', '12,3', '3 047,20', '3 047,49'],
        ['Cuivre - Mai 2025', '2,28 %', '11', '511,60', '511,90'],
        ['Pétrole US Brut Léger - Mai ...', '0,69 %', '46', '67,018', '67,053'],
        ['Pétrole Brut Brent - Mai 2025', '0,66 %', '47', '70,878', '70,913', 'up']]}
];
document.querySelector('.lists').innerHTML = lists.map(function(l){
    return '<article class="panel' + (l.scroll ? ' scroll' : '') + '"><header class="win-head">' + iconBtn('i-menu', 'Menu') +
        '<div class="win-tab"><h2>' + l.title + '</h2>' + icon('i-down') + icon('i-zoom') + '</div>' + iconBtn('i-plus', 'Ajouter') +
        '<span class="space"></span><i class="level"></i>' + iconBtn('i-max', 'Agrandir', 'ctl') + iconBtn('i-close', 'Fermer', 'ctl') + '</header>' +
        '<table class="rows' + l.rows.length + '"><colgroup><col class="name"><col class="pct"><col class="chg"><col><col class="ask-col"></colgroup>' +
        '<thead><tr><th class="name">PRODUIT ⇕</th><th colspan="2">PERFORMANCE ⇕</th><th class="sell">VENTE</th><th class="buy">ACHAT</th></tr></thead><tbody>' +
        l.rows.map(function(r){
            var fall = r[1].charAt(0) == '-', flat = r[1] == '0 %', c = flat ? '' : fall ? 'down' : 'up';
            return '<tr><td class="name"><i class="dot">i</i>' + r[0] + '</td><td class="pct ' + c + '">' + (flat ? '' : fall ? '▼' : '▲') + ' ' + r[1].replace('-', '') +
                '</td><td class="chg ' + c + '">' + r[2] + '</td><td class="bid ' + (r[5] || '') + '"><span>' + r[3] + '</span></td><td class="ask-col">' + r[4] + '</td></tr>';
        }).join('') + '</tbody></table>' + (l.foot ? '<button class="classic">Vue Classique ▴</button>' : '') + '</article>';
}).join('');

/*
 * charts. Every chart has its own units: box = x, y, width, height.
 * path = x, high, low ; tags = y, text, background, colour, wide
 */
var charts = {
    a: {box: [48, 141, 1314, 1304], plot: 1240, strip: 167, px: 1254, bars: 2, shade: 1,
        dates: [[396, '16 mars'], [705, '18 mars'], [1001, '19 mars']],
        prices: [[225, '20 000,000'], [514, '19 800,000'], [803, '19 600,000'], [1095, '19 400,000'], [1385, '19 200,000']],
        tags: [[384, '19 888,811', '#bcb8c0', '#222', 1], [412, '19 870,800', '#b40000', '#fff', 1], [968, '19 487,430', '#ff0000', '#fff', 1]],
        zones: [[595, 309, 1187, 381, 'blue'], [805, 578, 1193, 637, 'blue'], [104, 1027, 1175, 1109, 'green'], [40, 1345, 917, 1430, 'green']],
        lines: [[48, 1240, 412, 'red'], [350, 1240, 758, 'pink thick'], [225, 1240, 968, 'red dots']],
        notes: [[50, 976, '383,370 / 1,97 %', 'note-red']],
        flag: [768, 404, 997, 440], home: [1219, 176],
        path: [53,1200,1270,62,1145,1210,78,1130,1200,86,1080,1150,100,1050,1130,112,1040,1100,125,1030,1060,140,1035,1080,150,1070,1130,165,1080,1130,178,1080,1155,185,1020,1095,205,1030,1075,215,990,1110,225,1010,1050,235,920,1010,250,960,1020,258,790,1050,266,800,1010,272,720,880,280,680,790,290,680,820,300,710,800,320,680,790,332,622,760,345,690,780,355,810,870,362,820,880,375,810,860,390,780,830,410,805,835,430,810,840,450,815,860,470,820,880,480,790,850,495,750,800,508,700,790,520,655,720,535,560,730,548,460,700,557,500,680,570,640,750,578,700,780,588,640,730,600,510,700,607,360,520,613,310,380,625,345,490,635,480,530,650,440,490,665,470,520,680,500,545,690,540,600,705,570,610,720,600,640,733,610,650,745,580,630,765,550,580,778,500,570,785,485,520,795,500,560,805,550,640,820,540,610,835,570,680,843,660,1040,850,960,1060,865,980,1100,880,895,1020,900,910,1020,915,860,1010,930,940,970,945,940,1015,960,930,960,970,850,920,976,830,870,990,840,890,1010,865,900,1030,880,930,1050,900,930,1065,920,1020,1075,905,980,1090,870,920,1105,840,890,1125,850,900,1140,690,890,1150,720,830,1160,710,810,1170,630,700,1180,660,740,1190,700,810,1200,700,800,1207,500,720,1214,412,500],
        avg: [
            ['', 48,1115,85,1130,130,1105,180,1105,215,1090,260,1050,290,970,350,882,400,860,470,850,510,820,560,760,590,745,610,700,640,640,680,595,740,598,790,578,830,578,850,615,880,700,920,785,965,845,1010,850,1070,885,1130,885,1165,845,1195,825,1214,780],
            ['avg-red', 48,1178,80,1175,130,1115,180,1110,230,1070,265,1025,285,960,320,870,345,832,400,825,470,832,510,795,550,740,595,720,620,620,660,555,690,545,745,583,790,562,830,572,850,640,880,750,920,830,965,895,1010,888,1075,913,1130,890,1165,850,1195,805,1214,740],
            ['avg-green', 48,1238,75,1215,120,1120,180,1105,230,1060,265,1005,285,910,310,830,345,775,370,805,400,810,470,832,510,780,550,690,590,697,620,560,660,500,700,530,740,585,790,552,830,570,845,650,870,810,910,890,960,944,1000,895,1040,905,1075,925,1130,890,1165,810,1195,770,1214,690]
        ]},
    b: {box: [51, 141, 1293, 1304], plot: 1225, strip: 167, px: 1235, shade: 1,
        dates: [[149, '4 mars'], [323, '6 mars'], [496, '9 mars'], [604, '11 mars'], [777, '13 mars'], [951, '16 mars'], [1053, '18 mars'], [1227, '20 mars']],
        prices: [[284, '21 000,000'], [458, '20 700,000'], [632, '20 400,000'], [805, '20 100,000'], [979, '19 800,000'], [1328, '19 200,000']],
        tags: [[938, '19 870,800', '#b40000', '#fff', 1], [1160, '19 487,430', '#ff0000', '#fff', 1], [1421, '19 033,921', '#b4b2b8', '#222', 1]],
        zones: [[434, 791, 1057, 874, 'edit']],
        lines: [[912, 1225, 192, 'sand'], [912, 1225, 492, 'sand'], [912, 1225, 779, 'sand'], [912, 1225, 1364, 'sand'], [912, 1225, 1078, 'pink'], [51, 1225, 939, 'red'], [205, 1225, 1161, 'red dots']],
        notes: [[52, 1168, '383,370 / 1,97 %', 'note-red light']],
        flag: [613, 718, 852, 755], home: [1174, 177], edit: [423, 806, 563, 852],
        /* body top, body bottom, high, low ; negative top = falling */
        candles: [[285,330,285,375],[-285,390,238,447],[-390,538,318,538],[-538,588,538,704],[575,591,560,603],[-573,604,546,610],[-603,612,562,632],[-611,773,611,845],[528,774,524,825],[-527,552,465,698],[-552,570,545,630],[-570,573,552,592],[-573,602,522,628],[-600,657,580,730],[507,659,475,760],[-508,534,465,548],[522,532,516,548],[-520,575,508,575],[-574,639,562,680],[633,639,578,750],[-633,854,597,880],[777,855,757,868],[-777,787,760,788],[-784,787,775,790],[780,786,748,792],[-779,871,728,948],[768,871,725,1018],[760,770,715,780],[-797,858,780,920],[800,858,795,872],[-800,822,790,830],[-822,906,815,925],[-906,1119,906,1158],[-1122,1193,1092,1302],[-1193,1282,1172,1326],[1207,1284,1175,1377],[1180,1207,1165,1226],[1125,1182,1120,1192],[-1125,1214,1106,1308],[-1214,1230,1062,1342],[1179,1230,1175,1242],[-1179,1196,1168,1205],[1182,1197,1175,1234],[1120,1182,1105,1200],[1092,1120,1003,1228],[-1092,1103,1041,1146],[1058,1103,1050,1120],[-1058,1152,1050,1152],[-1153,1203,1140,1221],[1146,1203,1088,1217],[-1146,1283,1107,1294],[-1283,1310,1228,1358],[1245,1310,1230,1318],[1193,1246,1185,1260],[-1193,1224,1185,1236],[1174,1224,1160,1236],[1059,1176,1050,1197],[1043,1059,1023,1068],[-1043,1067,1040,1080],[-1057,1111,1052,1126],[1107,1110,1086,1112],[1105,1110,1095,1118],[1053,1106,1036,1110],[-1053,1057,960,1112],[968,1056,897,1071],[-966,972,952,985],[-970,1024,966,1026],[999,1024,995,1034],[-999,1005,967,1032],[-1005,1184,1000,1213],[1160,1184,1116,1190],[1154,1160,1138,1182],[1124,1154,1110,1158],[-1124,1176,1120,1182],[1117,1176,1105,1178],[1035,1120,1026,1157],[938,1038,930,1118]],
        avg: [
            ['', 51,220,72,232,145,322,160,350,232,405,247,420,304,443,333,465,362,510,420,568,505,640,530,690,560,750,600,815,640,872,680,920,725,945,770,985,810,1030,850,1056,885,1056,945,1065,985,1055,1040,1046,1080,1062,1130,1078,1158,1070],
            ['avg-red', 58,300,72,305,145,410,160,445,232,483,247,502,304,508,333,535,350,570,420,652,505,715,530,782,570,880,610,950,660,1020,700,1036,735,1048,780,1088,820,1127,850,1140,870,1132,900,1118,960,1112,1000,1080,1040,1064,1070,1084,1130,1102,1158,1082],
            ['avg-green', 58,352,72,355,160,522,232,546,250,562,274,552,290,548,333,580,362,640,420,720,450,730,500,780,530,840,553,950,600,1040,640,1090,680,1120,710,1115,735,1107,770,1130,800,1172,845,1190,880,1155,900,1140,950,1125,985,1095,1042,1047,1060,1075,1130,1112,1158,1080]
        ]},
    c: {box: [19, 607, 583, 323], plot: 561, strip: 616, px: 600, end: 1, bars: 1,
        dates: [[60, '19:00'], [100, '21:00'], [145, '19 mars'], [181, '02:00'], [221, '04:00'], [261, '06:00'], [301, '08:00'], [341, '10:00'], [381, '12:00'], [421, '14:00'], [462, '16:00'], [502, '18:00'], [542, '20:00']],
        prices: [[637, '20 000,00'], [683, '19 900,00'], [730, '19 800,00'], [776, '19 700,00'], [822, '19 600,00'], [915, '19 400,00']],
        tags: [[655, '19 959,58', '#ff00f0', '#300030'], [675, '19 916,82', '#ffa010', '#301800'], [690, '19 883,88', '#06b010', '#fff', 1], [752, '19 750,25', '#1060ff', '#001040'], [783, '19 683,87', '#ff20f0', '#300030'], [790, '19 667,97', '#ff5010', '#301000'], [797, '19 655,54', '#ff20f0', '#300030'], [870, '19 498,38', '#ff0000', '#fff', 1], [911, '19 408,15', '#ff20f0', '#300030'], [928, '19 370,78', '#20d8f8', '#002030']],
        zones: [[15, 681, 561, 689, 'cyan'], [15, 766, 561, 777, 'band'], [15, 848, 217, 904, 'green']],
        lines: [[19, 561, 655, 'mag'], [19, 561, 675, 'amber dash'], [19, 561, 690, 'red'], [19, 561, 752, 'blue dash'], [19, 561, 783, 'mag dots'], [19, 561, 791, 'flame thick'], [19, 561, 797, 'mag thick'], [19, 561, 870, 'pink dots'], [19, 561, 911, 'mag'], [19, 561, 912, 'amber dash'], [19, 561, 928, 'cyan']],
        slope: [297, 891, 530, 847],
        notes: [[20, 653, '(0,00 %)', 'note-mag'], [20, 781, '(50,00 %)', 'note-mag'], [20, 909, '(100,00 %)', 'note-mag'], [19, 873, '385,50 / 1,98 %', 'note-red']],
        home: [534, 619],
        path: [19,850,862,26,853,888,33,850,882,36,868,890,43,858,885,46,855,875,54,872,892,60,855,875,66,833,862,72,860,870,78,858,880,84,862,888,90,853,868,98,862,868,108,863,870,118,872,885,124,868,875,130,861,868,138,870,876,145,862,868,153,858,864,160,838,850,166,826,838,172,832,840,182,834,842,195,833,840,205,835,842,212,840,845,220,838,842,230,841,848,240,850,855,250,853,858,257,855,859,261,843,848,266,845,853,275,853,858,285,851,857,291,852,862,296,860,870,303,872,889,308,875,885,315,865,880,320,850,865,328,852,862,336,858,868,343,843,850,352,834,842,360,838,846,370,840,848,380,834,841,387,829,835,392,833,842,400,837,848,405,843,850,410,840,845,418,840,846,422,815,835,426,845,866,430,805,825,434,779,790,438,783,797,444,795,810,449,815,828,454,790,805,462,780,795,469,763,773,474,765,778,480,773,783,486,778,790,492,788,806,496,808,822,501,812,828,505,803,815,510,812,832,512,782,820,516,765,785,520,775,790,523,752,775,527,742,760,530,718,735,533,692,712]},
    d: {box: [900, 52, 899, 392], plot: 1759, strip: 61, px: 1797, end: 1, bars: 1,
        dates: [[960, '14 Mar'], [1145, '16 Mar'], [1348, '18 Mar'], [1542, '19 Mar'], [1744, '20 Mar']],
        prices: [[84, '20,200.00'], [154, '20,000.00'], [225, '19,800.00'], [295, '19,600.00'], [365, '19,400.00'], [436, '19,200.00']],
        tags: [[175, '19,941.21', '#fa4cf4', '#400840'], [200, '19,870.30', '#b40000', '#fff', 1], [314, '19,545.33', '#fa4cf4', '#400840'], [335, '19,486.43', '#ff0000', '#fff', 1], [412, '19,264.02', '#9ca0a0', '#222', 1]],
        zones: [[1286, 176, 1738, 196, 'blue'], [1396, 235, 1730, 256, 'cyan'], [1068, 330, 1721, 356, 'green'], [915, 425, 1529, 450, 'green']],
        oval: [1050, 309, 54, 14],
        lines: [[1027, 1759, 175, 'mag'], [900, 1759, 200, 'red'], [1026, 1759, 314, 'mag dots'], [953, 1759, 335, 'red dots']],
        notes: [[1028, 173, '(0.00%)', 'note-mag light'], [1028, 312, '(50.00%)', 'note-mag light'], [900, 338, '383.87 / 1.97%', 'note-red']],
        home: [1698, 64],
        path: [900,378,410,904,410,442,908,430,448,912,400,440,920,380,400,923,395,425,927,420,442,930,402,415,936,405,412,942,385,400,948,378,388,955,382,392,961,365,375,968,365,373,975,362,372,982,352,362,992,351,358,1000,355,362,1007,366,373,1013,370,378,1018,375,381,1025,358,370,1035,352,364,1043,348,360,1050,345,352,1055,338,345,1060,325,335,1065,330,342,1069,318,335,1071,294,330,1074,305,340,1077,330,348,1080,310,335,1083,290,305,1087,268,282,1093,275,290,1097,265,278,1102,275,292,1105,285,297,1110,282,295,1114,268,278,1118,265,278,1123,252,275,1127,275,283,1132,275,282,1136,290,300,1141,305,315,1146,297,308,1151,303,310,1157,291,298,1165,292,299,1175,297,302,1185,299,303,1198,300,303,1205,305,312,1211,308,314,1218,298,303,1224,292,298,1233,286,293,1240,275,282,1245,260,270,1250,265,272,1254,268,278,1256,237,250,1260,245,265,1264,215,255,1268,230,255,1272,245,270,1276,250,280,1280,275,289,1285,255,275,1290,265,278,1295,258,270,1300,225,240,1304,195,215,1307,177,190,1312,188,195,1316,188,196,1318,215,228,1324,216,222,1331,208,214,1337,216,222,1346,225,232,1353,227,232,1358,240,246,1366,240,245,1374,248,253,1383,253,257,1392,250,254,1400,238,243,1410,236,242,1416,218,225,1421,218,226,1425,228,235,1429,240,256,1437,235,245,1442,245,255,1447,240,250,1453,255,270,1456,260,270,1458,285,305,1460,315,335,1463,330,352,1468,335,350,1470,345,366,1478,330,352,1482,318,345,1488,320,345,1496,325,348,1502,308,335,1508,325,342,1515,330,340,1522,332,345,1530,330,336,1537,328,332,1542,310,316,1544,302,308,1550,308,313,1560,309,313,1570,317,321,1580,323,326,1584,316,320,1592,323,330,1600,328,334,1603,333,349,1608,325,335,1615,322,328,1621,308,314,1627,310,316,1636,306,312,1643,312,317,1649,308,315,1652,302,325,1654,285,295,1656,266,275,1660,280,290,1663,292,303,1666,275,290,1670,253,262,1674,262,270,1680,273,283,1685,295,302,1688,290,304,1690,265,285,1694,245,270,1697,208,220,1698,201,212]},
    e: {box: [28, -21, 1538, 1321], plot: 1498, strip: 4, px: 1564, end: 1, bars: 1,
        dates: [[91, '16:00'], [389, '17:00'], [687, '18:00'], [985, '19:00'], [1283, '20:00']],
        prices: [[177, '19 850,00'], [367, '19 800,00'], [556, '19 750,00'], [746, '19 700,00'], [936, '19 650,00'], [1125, '19 600,00']],
        tags: [[28, '19 888,98', '#ffa010', '#402000'], [100, '19 870,30', '#b40000', '#fff', 1], [665, '19 721,04', '#0838a8', '#fff'], [938, '19 649,08', '#ff1010', '#fff'], [1008, '19 630,74', '#fa3cf4', '#400840'], [1095, '19 607,13', '#9ca0a0', '#222', 1]],
        zones: [[20, 826, 470, 870, 'blue'], [1043, 706, 1180, 758, 'blue'], [982, 891, 1097, 929, 'green'], [963, 1108, 1095, 1150, 'green']],
        lines: [[28, 1498, 28, 'amber dash'], [28, 1498, 100, 'red'], [28, 1498, 180, 'green thick dots'], [28, 1498, 665, 'navy thick dash'], [28, 1498, 938, 'hot thick'], [28, 1498, 1008, 'mag thick'], [28, 1498, 1209, 'lime thick']],
        home: [1300, 15],
        path: [30,1070,1110,36,1100,1150,42,1130,1190,48,1160,1200,52,1170,1210,60,1130,1160,66,1140,1180,72,1150,1205,80,1120,1160,90,1110,1130,100,1080,1120,106,1020,1070,112,970,1030,120,940,980,128,905,950,132,900,940,138,940,970,148,940,970,155,980,1020,160,1020,1050,168,1050,1080,174,1030,1080,180,960,1010,185,930,960,192,920,950,198,940,980,203,870,900,210,880,920,216,890,920,222,900,925,230,890,935,238,855,890,243,850,880,250,880,905,260,880,905,268,850,880,276,840,870,284,805,830,296,795,820,305,800,830,313,815,840,320,770,800,328,710,740,335,690,720,342,672,700,348,690,720,353,690,720,360,730,760,366,730,750,372,715,750,378,755,775,388,740,770,396,750,780,402,735,760,410,690,710,416,710,740,424,765,800,430,770,800,438,810,840,446,820,850,454,840,860,462,845,875,470,830,860,478,840,870,486,790,810,492,800,830,500,820,850,508,800,820,516,775,800,524,810,830,532,830,850,540,860,890,546,845,860,552,870,890,562,870,895,568,890,910,578,895,920,590,910,935,600,895,920,606,885,905,614,910,930,622,920,945,626,930,965,634,880,910,642,838,860,650,860,880,658,930,955,666,900,930,674,860,890,682,900,930,692,910,950,700,960,985,708,985,1010,716,1010,1035,726,1000,1020,734,1060,1090,742,1100,1130,750,1130,1160,758,1095,1125,766,1070,1095,774,1075,1100,782,1065,1090,790,1090,1110,798,1110,1145,806,1090,1120,812,1120,1150,820,1160,1185,828,1165,1210,836,1140,1170,844,1110,1140,852,1065,1095,860,1040,1070,868,1020,1045,878,995,1030,884,1030,1060,892,1070,1100,900,1120,1150,906,1150,1190,912,1180,1220,918,1110,1150,926,1080,1110,934,1120,1150,942,1100,1120,950,1095,1115,958,1100,1120,965,1110,1140,968,825,880,972,820,900,976,920,980,980,860,960,984,910,960,988,930,1000,994,1060,1110,1000,1040,1120,1005,950,1000,1012,930,980,1018,860,920,1024,820,860,1030,780,860,1036,790,860,1042,740,800,1048,705,750,1056,760,800,1062,760,800,1070,820,850,1076,830,870,1082,770,820,1088,780,830,1096,800,870,1102,810,850,1108,900,940,1112,910,945,1118,790,850,1124,700,740,1130,600,630,1136,700,750,1142,640,700,1148,660,710,1152,640,680,1158,700,740,1164,710,770,1170,750,810,1176,620,700,1182,610,670,1188,520,560,1192,505,540,1198,590,640,1206,550,590,1212,550,590,1218,580,630,1224,530,580,1230,430,480,1238,470,510,1246,390,430,1252,340,370,1260,340,370,1266,270,310,1272,235,270,1278,260,290,1284,240,290,1288,200,230,1292,120,190,1300,100,120]}
};

function drawChart(el){
    var k = el.dataset.chart, c = charts[k], b = c.box;
    var W = el.clientWidth, H = el.clientHeight;
    var X = function(x){ return Math.round((x - b[0]) * W / b[2]); };
    var Y = function(y){ return Math.round((y - b[1]) * H / b[3]); };
    var out = '';
    var rect = function(x1, y1, x2, y2, cls, extra){
        out += '<rect x="' + x1 + '" y="' + y1 + '" width="' + (x2 - x1) + '" height="' + (y2 - y1) + '" class="' + cls + '" ' + (extra || '') + '/>';
    };
    var text = function(x, y, t, cls, extra){
        out += '<text x="' + x + '" y="' + y + '" class="' + cls + '" ' + (extra || '') + '>' + t + '</text>';
    };
    var plot = X(c.plot), strip = Y(c.strip);

    out += '<defs><linearGradient id="bg-' + k + '" x1="0" y1="0" x2="0" y2="1"><stop offset="0" stop-color="' + (c.shade ? '#e9e9e9' : '#fafafa') + '"/><stop offset="1" stop-color="#fff"/></linearGradient></defs>';
    rect(0, 0, W, H, '', 'fill="url(#bg-' + k + ')"');
    if(c.oval){
        out += '<ellipse class="zone-oval" cx="' + X(c.oval[0]) + '" cy="' + Y(c.oval[1]) + '" rx="' + (X(c.oval[0] + c.oval[2]) - X(c.oval[0])) + '" ry="' + c.oval[3] + '"/>';
    }
    c.zones.forEach(function(z){
        rect(X(z[0]) + .5, Y(z[1]) + .5, X(z[2]) + .5, Y(z[3]) + .5, 'zone-' + z[4]);
    });

    if(c.path){ out += sticks(c, X, Y); }
    if(c.candles){ out += candles(c, X, Y); }
    (c.avg || []).forEach(function(a){
        var d = '';
        for(var i = 1; i < a.length; i += 2){
            d += (i == 1 ? 'M' : 'L') + X(a[i]) + ' ' + Y(a[i + 1]);
        }
        out += '<path class="avg ' + a[0] + '" d="' + d + '"/>';
    });
    c.lines.forEach(function(l){
        var y = Y(l[2]) + (/thick/.test(l[3]) ? 0 : .5);
        out += '<path class="ln ' + l[3] + '" d="M' + X(l[0]) + ' ' + y + 'H' + X(l[1]) + '"/>';
    });
    if(c.slope){
        out += '<path class="violet dash" d="M' + X(c.slope[0]) + ' ' + Y(c.slope[1]) + 'L' + X(c.slope[2]) + ' ' + Y(c.slope[3]) + '"/>';
    }
    (c.notes || []).forEach(function(n){
        text(X(n[0]), Y(n[1]), n[2], n[3]);
    });
    if(c.flag){
        var f = c.flag, fx = X(f[2]), fy = Y((f[1] + f[3]) / 2);
        rect(X(f[0]) + .5, Y(f[1]) + .5, fx + .5, Y(f[3]) + .5, 'flag');
        out += '<path d="M' + fx + ' ' + (fy - 6) + 'l6 6-6 6z"/>';
        text(X((f[0] + f[2]) / 2), fy + 3, 'NASDAQ 100', 'flag-text');
    }
    if(c.edit){
        var e = c.edit, z = c.zones[0];
        out += '<circle class="handle" r="2" cx="' + X(z[0]) + '" cy="' + Y(z[1]) + '"/><circle class="handle" r="2" cx="' + X(z[2]) + '" cy="' + Y(z[3]) + '"/>';
        rect(X(e[0]), Y(e[1]), X(e[2]), Y(e[3]), 'edit-bar');
        ['i-gear', 'i-copy', 'i-bin'].forEach(function(id, i){
            out += '<use class="edit" href="#' + id + '" x="' + (X(e[0]) + 4 + i * 15) + '" y="' + (Y(e[1]) + 4) + '" width="8" height="8"/>';
        });
    }

    /* scales go over the plot */
    rect(0, 0, W, strip, 'strip');
    rect(plot, k == 'b' || k == 'd' ? 0 : strip, W, H, 'axis');
    out += '<path class="edge" d="M0 ' + (strip + .5) + 'H' + W + 'M' + (plot + .5) + ' ' + strip + 'V' + H + '"/>';
    c.dates.forEach(function(d){
        text(X(d[0]), strip - 2, d[1], 'label date');
    });
    c.prices.forEach(function(p){
        text(X(c.px), Y(p[0]) + 3, p[1], 'label' + (c.end ? ' tick-end' : ''));
    });
    c.tags.forEach(function(t){
        var y = Y(t[0]);
        if(t[4]){
            rect(plot, y - 5, W, y + 5, '', 'fill="' + t[2] + '"');
            text(plot + (k == 'a' ? 2 : 3), y + 3, t[1], k == 'b' ? '' : 'big', 'fill="' + t[3] + '"');
        }
        else{
            rect(plot + 1, y - 4, plot + 31, y + 4, '', 'fill="' + t[2] + '"');
            text(plot + 2, y + 2, t[1], 'small', 'fill="' + t[3] + '"');
        }
    });
    out += '<path class="home" d="M' + (X(c.home[0]) - 3) + ' ' + (Y(c.home[1]) + 3) + 'v-4l3-3 3 3v4z"/>';
    el.innerHTML = '<svg>' + out + '</svg>';
}

/* high/low sticks between the points of the path */
function sticks(c, X, Y){
    var p = c.path, seed = 7, last = null, group = {}, wide = c.bars == 2;
    var rnd = function(){
        seed = (seed * 16807) % 2147483647;
        return seed / 2147483647;
    };
    var i = 0;
    for(var x = X(p[0]); x <= X(p[p.length - 3]) + c.bars - 1; x += c.bars){
        while(i < p.length - 6 && X(p[i + 3]) < x){
            i += 3;
        }
        var x0 = X(p[i]), x1 = X(p[i + 3]);
        var t = x1 > x0 ? Math.min(1, Math.max(0, (x - x0) / (x1 - x0))) : 1;
        var hi = Y(p[i + 1] + (p[i + 4] - p[i + 1]) * t), lo = Y(p[i + 2] + (p[i + 5] - p[i + 2]) * t);
        var slope = (Y(p[i + 4]) - Y(p[i + 1])) / Math.max(1, x1 - x0);
        var steep = Math.abs(slope) > 3;
        var r = (lo - hi) / 2, m = (lo + hi) / 2 + (steep ? 0 : r * (rnd() - .5));
        var half = Math.max(1, r * (.15 + .5 * rnd()));
        var up = steep ? slope < 0 : last === null || m < last;
        var cls = wide ? (up ? 'up' : 'down') : rnd() < .25 ? 'c-mix' : up ? 'c-up' : 'c-down';
        if(wide){
            add(cls + '-wick', m - r * (.5 + .5 * rnd()), m + r * (.5 + .5 * rnd()));
            add(cls + '-bar', m - half, m + half);
        }
        else{
            /* join the stick to the one before so the line has no holes */
            var top = m - half, bottom = m + half;
            if(last !== null){
                top = Math.min(top, last);
                bottom = Math.max(bottom, last);
            }
            add(cls, top, bottom);
        }
        last = m;
    }
    function add(name, y1, y2){
        group[name] = (group[name] || '') + 'M' + (x + .5) + ' ' + Math.round(y1) + 'V' + Math.round(y2 + 1);
    }
    return Object.keys(group).sort().reverse().map(function(n){
        return '<path class="' + n + '" d="' + group[n] + '"/>';
    }).join('');
}
function candles(c, X, Y){
    return c.candles.map(function(v, i){
        var x = X(58 + i * 14.49), n = v[0] < 0 ? 'down' : 'up';
        var top = Y(Math.abs(v[0])), bottom = Math.max(top + 1, Y(v[1]));
        return '<path class="' + n + '-wick" d="M' + (x + .5) + ' ' + Y(v[2]) + 'V' + Y(v[3]) + '"/>' +
            '<path class="' + n + '-bar" stroke-width="3" d="M' + (x + .5) + ' ' + top + 'V' + bottom + '"/>';
    }).join('');
}
function drawAll(){
    document.querySelectorAll('.chart').forEach(drawChart);
}
drawAll();
window.onresize = drawAll;
```
